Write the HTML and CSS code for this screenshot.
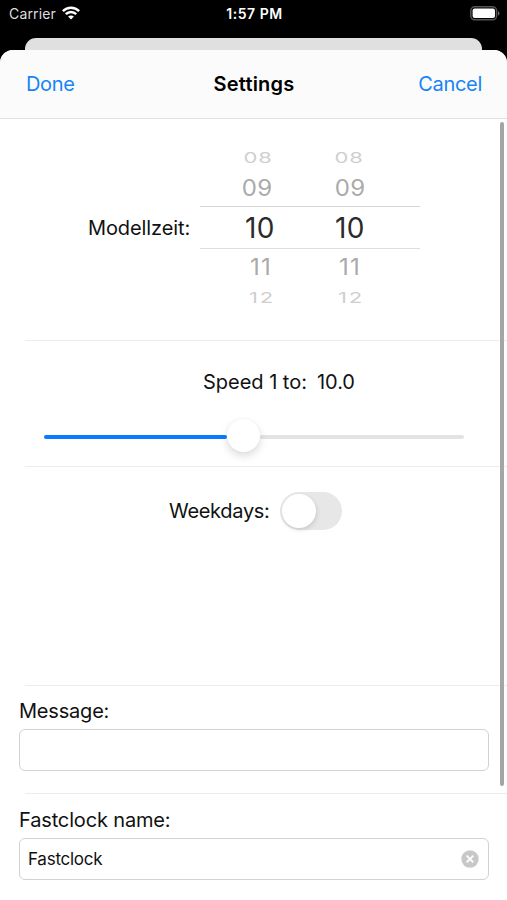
FILE: index.html
```html
<!DOCTYPE html>
<html lang="en">
<head>
<meta charset="utf-8">
<title>Settings</title>
<link rel="stylesheet" href="styles.css">
</head>
<body>
<div class="status">
  <div class="carrier"><span>Carrier</span>
    <svg width="18" height="14" viewBox="0 0 18 14" fill="none" stroke="#fff" stroke-width="2.5"><path d="M.9 5.1C5.3.5 12.700.5 17.100 5.100M3.800 8.200c3-3 7.400-3 10.400 0"/><path d="M9 13.500 6.100 10.500c1.700-1.500 4.100-1.500 5.800 0Z" fill="#fff" stroke="none"/></svg>
  </div>
  <span class="time">1:57 PM</span>
  <svg class="battery" width="31" height="15" viewBox="0 0 31 15"><rect x=".8" y=".8" width="25.800" height="13" rx="4" fill="none" stroke="#555" stroke-width="1.500"/><rect x="2.600" y="2.600" width="22.400" height="9.400" rx="2" fill="#fff"/><path d="M28 5.200c2 .5 2 3.700 0 4.200Z" fill="#666"/></svg>
</div>
<div class="backdrop"></div>
<main class="sheet">
  <header class="nav"><a class="done">Done</a><h1>Settings</h1><a class="cancel">Cancel</a></header>
  <section class="cell picker-cell">
    <span class="label model">Modellzeit:</span>
    <div class="picker">
      <div class="row far"><span>08</span><span>08</span></div>
      <div class="row near"><span>09</span><span>09</span></div>
      <div class="row current"><span>10</span><span>10</span></div>
      <div class="row near below"><span>11</span><span>11</span></div>
      <div class="row far last"><span>12</span><span>12</span></div>
    </div>
  </section>
  <section class="cell speed-cell">
    <div class="speed"><span class="label speed-name">Speed 1 to:</span><span class="label value">10.0</span></div>
    <div class="slider"><div class="filled"></div><div class="knob"></div><div class="rest"></div></div>
  </section>
  <section class="cell week-cell"><span class="label week">Weekdays:</span><div class="switch"><div class="thumb"></div></div></section>
  <section class="cell field-cell"><span class="label message">Message:</span><div class="field"></div></section>
  <section class="cell name-cell"><span class="label clock">Fastclock name:</span>
    <div class="field"><span class="entry">Fastclock</span>
      <svg width="18" height="18" viewBox="0 0 18 18"><circle cx="9" cy="9" r="8.700" fill="#c8c8c8"/><path d="m5.700 5.700 6.600 6.600m0-6.600-6.600 6.600" stroke="#fff" stroke-width="1.900"/></svg>
    </div>
  </section>
  <div class="scrollbar"></div>
</main>
</body>
</html>
```
FILE: styles.css
```css
* { box-sizing: border-box; }
body { margin: 0; width: 507px; height: 900px; overflow: hidden; background: #000; font-family: Inter, "Liberation Sans", sans-serif; color: #111; }
.status { height: 38px; display: grid; grid-template-columns: 1fr auto 1fr; padding: 6px 6px 0 9px; align-items: start; color: #fff; line-height: 16px; }
.carrier { display: flex; gap: 6px; font-size: 14px; letter-spacing: .15px; color: #ddd; }
.time { font-size: 14px; font-weight: 600; letter-spacing: .55px; margin-right: 1px; }
.battery { justify-self: end; }
.backdrop { height: 12px; margin: 0 25px; background: #e0e0e0; border-radius: 11px 11px 0 0; }
.sheet { position: relative; height: 850px; background: #fff; border-radius: 13px 13px 0 0; }
.nav { height: 69px; border-bottom: 1px solid #e2e2e2; background: #fbfbfb; border-radius: 13px 13px 0 0; display: grid; grid-template-columns: 1fr auto 1fr; align-items: center; padding: 0 25px 0 26px; font-size: 20px; }
h1 { margin: 0; font-size: 20px; font-weight: 600; letter-spacing: .2px; color: #000; }
.nav a { color: #1684f7; white-space: nowrap; }
.nav .done { letter-spacing: -.35px; }
.nav .cancel { justify-self: end; letter-spacing: -.3px; }
.cell { position: relative; display: flex; }
.cell:not(.name-cell)::after { content: ""; position: absolute; left: 25px; right: 0; bottom: 0; height: 1px; background: #ececec; }
.label { font-size: 20px; line-height: 24px; white-space: nowrap; align-self: flex-start; }
.picker-cell { height: 222px; padding: 28px 87px 0 88px; justify-content: space-between; }
.model { margin-top: 69px; letter-spacing: -.1px; }
.picker { width: 220px; display: grid; grid-template-rows: 21px 38px 43px 36px 25px; height: 163px; }
.row { display: grid; grid-template-columns: 90px 90px; justify-content: start; padding-left: 15px; align-items: center; justify-items: center; }
.row span { display: block; line-height: 1; }
.current { border-top: 1px solid #d7d7d7; border-bottom: 1px solid #dedede; font-size: 28px; letter-spacing: .5px; color: #2b2b2b; }
.near { font-size: 24px; color: #aaa; padding-left: 9px; grid-template-columns: 96px 90px; padding-top: 4px; letter-spacing: .3px; }
.near span { transform: scaleY(.93); }
.below { padding: 2px 0 0 17px; grid-template-columns: 88px 90px; letter-spacing: 1.2px; }
.far { font-size: 22px; color: #cfcfcf; padding-left: 12px; grid-template-columns: 92px 90px; letter-spacing: .8px; }
.far span { transform: scaleY(.67); }
.last { padding-left: 18px; grid-template-columns: 88px 90px; letter-spacing: 1.7px; }
.speed-cell { height: 126px; flex-direction: column; padding: 29px 43px 0 44px; }
.speed { display: flex; gap: 10px; padding-left: 159px; letter-spacing: -.02px; }
.slider { height: 33px; margin-top: 26px; display: flex; align-items: center; }
.filled { width: 183px; height: 4px; border-radius: 2px; background: #0a7aff; }
.rest { flex: 1; height: 4px; border-radius: 2px; background: #e3e3e3; }
.knob { width: 33px; height: 33px; border-radius: 50%; background: #fff; position: relative; z-index: 1; top: -1px; box-shadow: 0 4px 9px rgba(0,0,0,.14), 0 0 2px rgba(0,0,0,.06); }
.week-cell { height: 219px; padding: 25px 0 0 169px; gap: 10px; }
.week { margin-top: 7px; letter-spacing: -.3px; }
.switch { width: 62px; height: 38px; border-radius: 19px; background: #e7e7e7; padding: 2px; }
.thumb { width: 34px; height: 34px; border-radius: 50%; background: #fff; box-shadow: 1px 2px 4px rgba(0,0,0,.12); }
.field-cell, .name-cell { flex-direction: column; height: 108px; padding: 13px 18px 0 19px; }
.name-cell { height: 107px; padding-top: 14px; }
.message { letter-spacing: -.2px; }
.clock { letter-spacing: -.15px; }
.field { height: 42px; margin-top: 6px; border: 1px solid #d2d2d2; border-radius: 6px; display: flex; align-items: center; justify-content: space-between; padding: 0 9px 0 8px; }
.entry { font-size: 17px; letter-spacing: -.25px; }
.scrollbar { position: absolute; right: 3px; top: 72px; width: 4px; height: 664px; border-radius: 2px; background: #a5a5a5; z-index: 2; }
```
